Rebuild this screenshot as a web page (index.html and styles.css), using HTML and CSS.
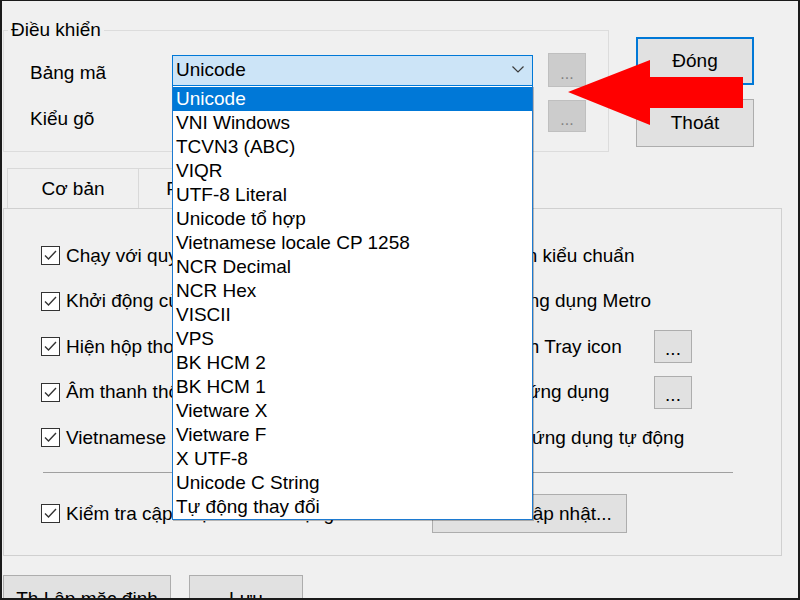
FILE: index.html
```html
<!doctype html>
<html lang="vi">
  <head>
    <meta charset="UTF-8" />
    <title>Điều khiển</title>
    <link rel="stylesheet" href="styles.css">
  </head>
  <body>
    <div class="screen">
      <div class="top">
        <fieldset class="group">
          <legend>Điều khiển</legend>
          <div class="field-row">
            <span class="field-label">Bảng mã</span>
            <div class="combo-wrap">
              <div class="combo open">
                <span>Unicode</span>
                <svg class="chevron" width="12" height="7" viewBox="0 0 12 7"><polyline points="0.5,0.5 6,6 11.5,0.5" fill="none" stroke="#3c3c3c" stroke-width="1.2"/></svg>
              </div>
              <ul class="dropdown">
                <li class="selected">Unicode</li>
                <li>VNI Windows</li>
                <li>TCVN3 (ABC)</li>
                <li>VIQR</li>
                <li>UTF-8 Literal</li>
                <li>Unicode tổ hợp</li>
                <li>Vietnamese locale CP 1258</li>
                <li>NCR Decimal</li>
                <li>NCR Hex</li>
                <li>VISCII</li>
                <li>VPS</li>
                <li>BK HCM 2</li>
                <li>BK HCM 1</li>
                <li>Vietware X</li>
                <li>Vietware F</li>
                <li>X UTF-8</li>
                <li>Unicode C String</li>
                <li>Tự động thay đổi</li>
              </ul>
            </div>
            <button class="dots-btn" disabled>...</button>
          </div>
          <div class="field-row">
            <span class="field-label">Kiểu gõ</span>
            <div class="combo-wrap">
              <div class="combo">
                <span>Telex</span>
              </div>
            </div>
            <button class="dots-btn" disabled>...</button>
          </div>
        </fieldset>
        <div class="side-buttons">
          <button class="btn btn-default">Đóng</button>
          <button class="btn">Thoát</button>
        </div>
      </div>

      <div class="tabs">
        <div class="tab">Cơ bản</div>
        <div class="tab">Phím tắt</div>
      </div>

      <div class="panel">
        <div class="options">
          <label class="opt"><span class="check"></span>Chạy với quyền Administrator</label>
          <label class="opt"><span class="check"></span><span class="opt-text">Dùng liền kiểu chuẩn</span></label>
          <label class="opt"><span class="check"></span>Khởi động cùng Windows</label>
          <label class="opt"><span class="check"></span><span class="opt-text">Hỗ trợ ứng dụng Metro</span></label>
          <label class="opt"><span class="check"></span>Hiện hộp thoại khi khởi động</label>
          <label class="opt"><span class="check"></span><span class="opt-text">Tùy chỉnh Tray icon</span><button class="btn small-btn">...</button></label>
          <label class="opt"><span class="check"></span>Âm thanh thông báo</label>
          <label class="opt"><span class="check"></span><span class="opt-text">Loại trừ ứng dụng</span><button class="btn small-btn">...</button></label>
          <label class="opt"><span class="check"></span>Vietnamese interface</label>
          <label class="opt"><span class="check"></span><span class="opt-text">Tắt theo ứng dụng tự động</span></label>
        </div>
        <hr class="sep">
        <div class="options update-row">
          <label class="opt"><span class="check"></span>Kiểm tra cập nhật lúc khởi động</label>
          <div><button class="btn update-btn">Kiểm tra cập nhật...</button></div>
        </div>
      </div>

      <div class="bottom-buttons">
        <button class="btn wide-btn">Th Lập mặc định</button>
        <button class="btn save-btn">Lưu</button>
      </div>

      <svg class="arrow" width="175" height="65" viewBox="0 0 175 65">
        <polygon points="0,32 82,0 82,17 175,17 175,48 82,48 82,65" fill="#ff0000"/>
      </svg>
    </div>
  </body>
</html>
```

FILE: styles.css
```css
body {
  margin: 0;
  font-family: "Liberation Sans", Arial, sans-serif;
  font-size: 19px;
  color: #000;
  background-color: #f0f0f0;
}
.screen {
  position: relative;
  width: 800px;
  height: 600px;
  box-sizing: border-box;
  border-style: solid;
  border-color: #1a1a1a;
  border-width: 1px 2px 2px 2px;
  background-color: #f0f0f0;
  overflow: hidden;
}
button {
  font-family: inherit;
  font-size: inherit;
  color: #000;
}
.top {
  display: flex;
  align-items: flex-start;
  padding-top: 18px;
}
.group {
  margin: 0 0 0 1px;
  padding: 0 0 19px 0;
  width: 604px;
  border: 1px solid #dcdcdc;
}
.group legend {
  margin-left: 4px;
  padding: 0 3px;
  line-height: 22px;
}
.field-row {
  display: grid;
  grid-template-columns: 142px 361px 53px;
  align-items: center;
  padding-left: 26px;
  margin-top: 12px;
}
.field-row + .field-row {
  margin-top: 13px;
}
.field-label {
  padding-top: 5px;
}
.combo-wrap {
  position: relative;
}
.combo {
  display: flex;
  align-items: center;
  justify-content: space-between;
  height: 31px;
  box-sizing: border-box;
  padding: 0 8px 0 3px;
  border: 1px solid #adadad;
  background-color: #e1e1e1;
}
.combo.open {
  border-color: #0078d7;
  background-color: #cce4f7;
}
.chevron {
  margin-top: -1px;
}
.dropdown {
  position: absolute;
  top: 100%;
  left: 0;
  z-index: 10;
  width: 361px;
  box-sizing: border-box;
  margin: 0;
  padding: 1px 0 0 0;
  list-style: none;
  background-color: #fff;
  border: 1px solid #1c7ad1;
  border-top: none;
  box-shadow: 1px 1px 0 rgba(0, 0, 0, 0.25);
}
.dropdown li {
  height: 24px;
  line-height: 24px;
  padding-left: 3px;
  white-space: nowrap;
}
.dropdown li.selected {
  background-color: #0078d7;
  color: #fff;
}
.dots-btn {
  width: 38px;
  height: 34px;
  margin-left: 15px;
  padding: 8px 0 0 0;
  border: 1px solid #bfbfbf;
  background-color: #cccccc;
  color: #838383;
  font-size: 16px;
  line-height: 1;
}
.field-row + .field-row .dots-btn {
  height: 32px;
}
.side-buttons {
  display: flex;
  flex-direction: column;
  gap: 14px;
  margin: 18px 0 0 27px;
}
.btn {
  padding: 0;
  border: 1px solid #adadad;
  background-color: #e1e1e1;
  cursor: pointer;
}
.side-buttons .btn {
  width: 118px;
  height: 48px;
}
.btn-default {
  border: 2px solid #0078d7;
}
.tabs {
  display: flex;
  margin: 16px 0 0 5px;
}
.tab {
  width: 132px;
  height: 40px;
  box-sizing: border-box;
  line-height: 40px;
  text-align: center;
  border: 1px solid #d9d9d9;
  border-bottom: none;
  background-color: #f0f0f0;
}
.tab + .tab {
  width: 126px;
  border-left: none;
}
.panel {
  width: 779px;
  box-sizing: border-box;
  margin-left: 1px;
  padding: 30px 0 22px 37px;
  border: 1px solid #d0d0d0;
}
.options {
  display: grid;
  grid-template-columns: 391px 1fr;
  grid-auto-rows: 33px;
  row-gap: 12.5px;
}
.opt {
  display: flex;
  align-items: center;
  white-space: nowrap;
}
.check {
  flex: none;
  width: 19px;
  height: 19px;
  box-sizing: border-box;
  margin-right: 6px;
  border: 1px solid #333;
  background: #fff url("data:image/svg+xml,%3Csvg xmlns='http://www.w3.org/2000/svg' width='17' height='17'%3E%3Cpolyline points='3,8.5 6.5,12 14,4' fill='none' stroke='%23333' stroke-width='1.4'/%3E%3C/svg%3E") no-repeat center;
}
.opt-text {
  min-width: 197px;
}
.small-btn {
  width: 38px;
  height: 33px;
  line-height: 1;
  padding-top: 4px;
}
.sep {
  width: 690px;
  margin: 18px 0 0 2px;
  border: none;
  border-top: 1px solid #a0a0a0;
}
.update-row {
  margin-top: 21px;
  grid-auto-rows: 39px;
}
.update-btn {
  width: 195px;
  height: 39px;
}
.bottom-buttons {
  display: flex;
  gap: 18px;
  margin: 19px 0 0 1px;
}
.bottom-buttons .btn {
  height: 48px;
}
.wide-btn {
  width: 168px;
}
.save-btn {
  width: 114px;
}
.arrow {
  position: absolute;
  left: 566px;
  top: 59px;
  z-index: 20;
}
```
